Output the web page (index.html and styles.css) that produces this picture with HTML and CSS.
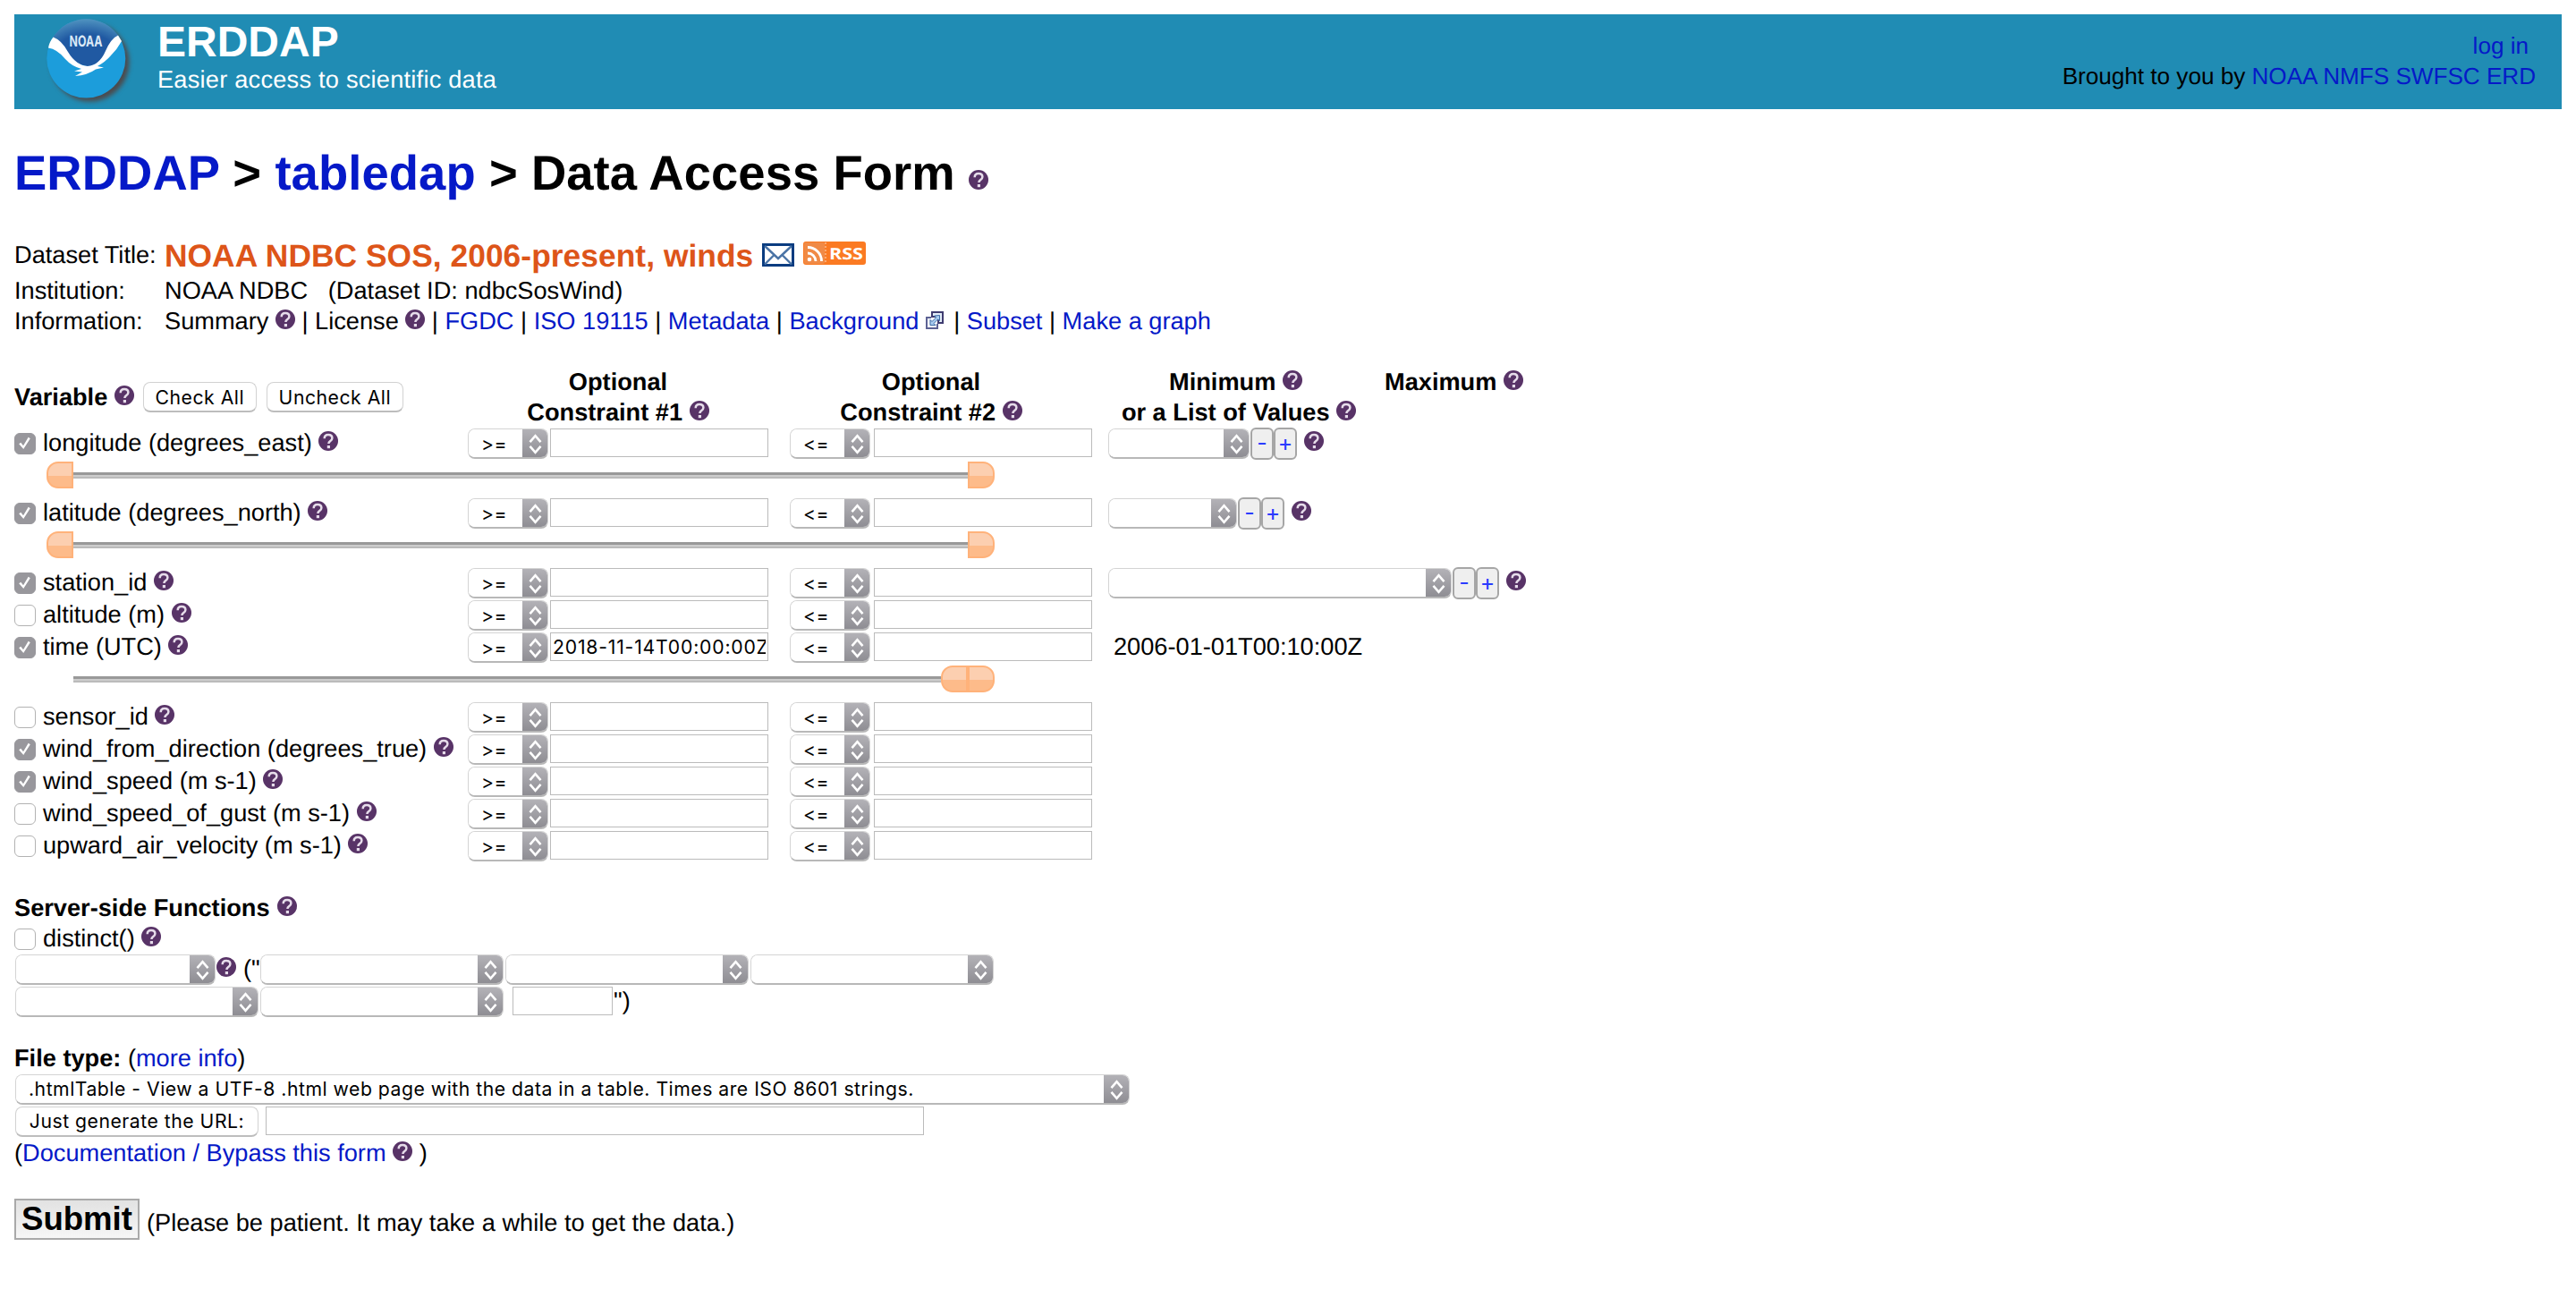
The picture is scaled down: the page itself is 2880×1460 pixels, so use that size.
FILE: index.html
```html
<!DOCTYPE html>
<html lang="en">
<head>
<meta charset="utf-8">
<title>ERDDAP - NOAA NDBC SOS, 2006-present, winds - Data Access Form</title>
<link rel="stylesheet" href="styles.css">
</head>
<body>
<svg class="defs" aria-hidden="true">
  <defs>
    <radialGradient id="top" cx=".5" cy=".8" r=".8">
      <stop offset=".6" stop-color="#2059a2"/><stop offset="1" stop-color="#4f93c0"/>
    </radialGradient>
  </defs>
  <symbol id="help" viewBox="0 0 22 22">
    <circle cx="11" cy="11" r="11" fill="#583367"/>
    <path d="M6.7 8.3C6.7 5.2 8.6 4 11 4s4.4 1.3 4.4 3.800c0 3.400-4 3.200-4 6.200" fill="none" stroke="#e6dcea" stroke-width="2.500"/>
    <rect x="9.800" y="16" width="3.200" height="3.200" fill="#e6dcea"/>
  </symbol>
  <symbol id="updown" viewBox="0 0 29 34">
    <path d="M8.500 15.200l6-7 6 7M8.500 19.800l6 7 6-7" fill="none" stroke="#fff" stroke-width="2.600"/>
  </symbol>
</svg>

<header class="banner">
  <svg class="logo" viewBox="0 0 120 106">
    <circle cx="60.500" cy="53.500" r="44" fill="#4c4a4c" class="logo-shadow"/>
    <circle cx="56.300" cy="49.500" r="44" fill="#1c9ddb"/>
    <path d="M19 26A44 44 0 0 1 93.600 26Q86 30 80 40Q71 58 57 58Q43 56 36 43Q29 30 19 26Z" fill="url(#top)"/>
    <path d="M19.500 25.500Q29 29 36 42Q45 57 58 58Q71 57 78 41Q84 27 92 23.500L96 30Q91 39 84 46Q78 53 69 58L76 59.500L67 61.500Q58 68 44 69L52 64.500L43 63.500L51 61Q40 58 33 50Q24 39 14 37.500Q15 31 19.500 25.500Z" fill="#fff"/>
    <text x="37.500" y="35.500" class="logo-text" textLength="37" lengthAdjust="spacingAndGlyphs">NOAA</text>
  </svg>
  <div class="brand">
    <div class="brand-name">ERDDAP</div>
    <div class="brand-tag">Easier access to scientific data</div>
  </div>
  <div class="account">
    <div class="login"><a href="#">log in</a></div>
    <div>Brought to you by <a href="#">NOAA NMFS SWFSC ERD</a></div>
  </div>
</header>

<h1><a href="#">ERDDAP</a> &gt; <a href="#">tabledap</a> &gt; Data Access Form <svg class="help"><use href="#help"/></svg></h1>

<div class="info">
  <div class="title-label">Dataset Title:</div>
  <div class="title">
    <span>NOAA NDBC SOS, 2006-present, winds</span>
    <svg class="mail" viewBox="0 0 36 26">
      <rect x="1.500" y="1.500" width="33" height="23" fill="#fff" stroke="#0a3c80" stroke-width="3"/>
      <path d="M3 3l15 14L33 3M3 23.500l10-10M33 23.500l-10-10" fill="none" stroke="#4a73a5" stroke-width="2.400"/>
    </svg>
    <svg class="rss" viewBox="0 0 70 26">
      <rect width="70" height="26" rx="3" fill="#fb7a22"/>
      <rect x="1" y="1" width="23" height="24" rx="2" fill="#f08a46"/>
      <path d="M5 13a9 9 0 0 1 9 9M5 6.500a15.500 15.500 0 0 1 15.500 15.500" fill="none" stroke="#fff" stroke-width="2.800"/>
      <circle cx="7" cy="20" r="2.300" fill="#fff"/>
      <path d="M25 1v24" stroke="#fdb98a" stroke-width="1.500" stroke-dasharray="2 2"/>
      <text x="29" y="19.500" class="rss-text" textLength="38" lengthAdjust="spacingAndGlyphs">RSS</text>
    </svg>
  </div>
  <div>Institution:</div>
  <div>NOAA NDBC &nbsp; (Dataset ID: ndbcSosWind)</div>
  <div>Information:</div>
  <div>Summary <svg class="help"><use href="#help"/></svg> | License <svg class="help"><use href="#help"/></svg> | <a href="#">FGDC</a> | <a href="#">ISO 19115</a> | <a href="#">Metadata</a> | <a href="#">Background</a> <svg class="ext" viewBox="0 0 20 20">
      <path d="M7 1h12v12h-5V6H7z" fill="#e4edf8" stroke="#3f3c70" stroke-width="2"/>
      <path d="M6 7H1v12h12v-5" fill="#f4f7fc" stroke="#5d6294" stroke-width="2"/>
      <path d="M15.500 4.500v6l-2-1.500-4.500 4.500 2 2h-6v-6l2 2 4.500-4.500-1.800-2z" fill="#a9cdf0" stroke="#3d6ba6" stroke-width="1"/>
    </svg>&nbsp; | <a href="#">Subset</a> | <a href="#">Make a graph</a></div>
</div>

<form>
<div class="row head">
  <div class="variable"><span>Variable <svg class="help"><use href="#help"/></svg></span><button type="button" class="btn check-all">Check All</button><button type="button" class="btn uncheck-all">Uncheck All</button></div>
  <div class="h1c">Optional<br>Constraint #1 <svg class="help"><use href="#help"/></svg></div>
  <div class="h2c">Optional<br>Constraint #2 <svg class="help"><use href="#help"/></svg></div>
  <div class="h3c"><span class="min">Minimum <svg class="help"><use href="#help"/></svg></span><br>or a List of Values <svg class="help"><use href="#help"/></svg></div>
  <div class="h4c">Maximum <svg class="help"><use href="#help"/></svg></div>
</div>

<div class="row">
  <label><input type="checkbox" checked><span>longitude (degrees_east) <svg class="help"><use href="#help"/></svg></span></label>
  <div class="con"><span class="sel op"><select><option>&gt;=</option></select><svg><use href="#updown"/></svg></span><input type="text"></div>
  <div class="con two"><span class="sel op"><select><option>&lt;=</option></select><svg><use href="#updown"/></svg></span><input type="text"></div>
  <div class="list"><span class="sel lon"><select></select><svg><use href="#updown"/></svg></span><button type="button" class="step">-</button><button type="button" class="step">+</button><svg class="help"><use href="#help"/></svg></div>
</div>
<div class="slider"><i class="thumb left"></i><i class="bar"></i><i class="thumb right"></i></div>

<div class="row">
  <label><input type="checkbox" checked><span>latitude (degrees_north) <svg class="help"><use href="#help"/></svg></span></label>
  <div class="con"><span class="sel op"><select><option>&gt;=</option></select><svg><use href="#updown"/></svg></span><input type="text"></div>
  <div class="con two"><span class="sel op"><select><option>&lt;=</option></select><svg><use href="#updown"/></svg></span><input type="text"></div>
  <div class="list"><span class="sel lat"><select></select><svg><use href="#updown"/></svg></span><button type="button" class="step">-</button><button type="button" class="step">+</button><svg class="help"><use href="#help"/></svg></div>
</div>
<div class="slider"><i class="thumb left"></i><i class="bar"></i><i class="thumb right"></i></div>

<div class="row">
  <label><input type="checkbox" checked><span>station_id <svg class="help"><use href="#help"/></svg></span></label>
  <div class="con"><span class="sel op"><select><option>&gt;=</option></select><svg><use href="#updown"/></svg></span><input type="text"></div>
  <div class="con two"><span class="sel op"><select><option>&lt;=</option></select><svg><use href="#updown"/></svg></span><input type="text"></div>
  <div class="list"><span class="sel station"><select></select><svg><use href="#updown"/></svg></span><button type="button" class="step">-</button><button type="button" class="step">+</button><svg class="help"><use href="#help"/></svg></div>
</div>
<div class="row">
  <label><input type="checkbox"><span>altitude (m) <svg class="help"><use href="#help"/></svg></span></label>
  <div class="con"><span class="sel op"><select><option>&gt;=</option></select><svg><use href="#updown"/></svg></span><input type="text"></div>
  <div class="con two"><span class="sel op"><select><option>&lt;=</option></select><svg><use href="#updown"/></svg></span><input type="text"></div>
</div>
<div class="row">
  <label><input type="checkbox" checked><span>time (UTC) <svg class="help"><use href="#help"/></svg></span></label>
  <div class="con"><span class="sel op"><select><option>&gt;=</option></select><svg><use href="#updown"/></svg></span><input type="text" value="2018-11-14T00:00:00Z"></div>
  <div class="con two"><span class="sel op"><select><option>&lt;=</option></select><svg><use href="#updown"/></svg></span><input type="text"></div>
  <div class="minval">2006-01-01T00:10:00Z</div>
</div>
<div class="slider late"><i class="bar"></i><i class="thumb left"></i><i class="thumb right"></i></div>

<div class="row">
  <label><input type="checkbox"><span>sensor_id <svg class="help"><use href="#help"/></svg></span></label>
  <div class="con"><span class="sel op"><select><option>&gt;=</option></select><svg><use href="#updown"/></svg></span><input type="text"></div>
  <div class="con two"><span class="sel op"><select><option>&lt;=</option></select><svg><use href="#updown"/></svg></span><input type="text"></div>
</div>
<div class="row">
  <label><input type="checkbox" checked><span>wind_from_direction (degrees_true) <svg class="help"><use href="#help"/></svg></span></label>
  <div class="con"><span class="sel op"><select><option>&gt;=</option></select><svg><use href="#updown"/></svg></span><input type="text"></div>
  <div class="con two"><span class="sel op"><select><option>&lt;=</option></select><svg><use href="#updown"/></svg></span><input type="text"></div>
</div>
<div class="row">
  <label><input type="checkbox" checked><span>wind_speed (m s-1) <svg class="help"><use href="#help"/></svg></span></label>
  <div class="con"><span class="sel op"><select><option>&gt;=</option></select><svg><use href="#updown"/></svg></span><input type="text"></div>
  <div class="con two"><span class="sel op"><select><option>&lt;=</option></select><svg><use href="#updown"/></svg></span><input type="text"></div>
</div>
<div class="row">
  <label><input type="checkbox"><span>wind_speed_of_gust (m s-1) <svg class="help"><use href="#help"/></svg></span></label>
  <div class="con"><span class="sel op"><select><option>&gt;=</option></select><svg><use href="#updown"/></svg></span><input type="text"></div>
  <div class="con two"><span class="sel op"><select><option>&lt;=</option></select><svg><use href="#updown"/></svg></span><input type="text"></div>
</div>
<div class="row">
  <label><input type="checkbox"><span>upward_air_velocity (m s-1) <svg class="help"><use href="#help"/></svg></span></label>
  <div class="con"><span class="sel op"><select><option>&gt;=</option></select><svg><use href="#updown"/></svg></span><input type="text"></div>
  <div class="con two"><span class="sel op"><select><option>&lt;=</option></select><svg><use href="#updown"/></svg></span><input type="text"></div>
</div>

<div class="section server"><b>Server-side Functions</b> <svg class="help"><use href="#help"/></svg></div>
<div class="row distinct">
  <label><input type="checkbox"><span>distinct() <svg class="help"><use href="#help"/></svg></span></label>
</div>
<div class="fn">
  <span class="sel fn-name"><select></select><svg><use href="#updown"/></svg></span>
  <svg class="help"><use href="#help"/></svg>
  <span class="open">("</span>
  <span class="sel arg"><select></select><svg><use href="#updown"/></svg></span>
  <span class="sel arg"><select></select><svg><use href="#updown"/></svg></span>
  <span class="sel arg"><select></select><svg><use href="#updown"/></svg></span>
</div>
<div class="fn">
  <span class="sel arg"><select></select><svg><use href="#updown"/></svg></span>
  <span class="sel arg"><select></select><svg><use href="#updown"/></svg></span>
  <input type="text" class="short">
  <span class="close">")</span>
</div>

<div class="section filetype"><b>File type:</b> (<a href="#">more info</a>)</div>
<div class="fn file"><span class="sel type"><select><option>.htmlTable - View a UTF-8 .html web page with the data in a table. Times are ISO 8601 strings.</option></select><svg><use href="#updown"/></svg></span></div>
<div class="fn url"><button type="button" class="btn generate">Just generate the URL:</button><input type="text" class="long"></div>
<div class="docs">(<a href="#">Documentation / Bypass this form</a> <svg class="help"><use href="#help"/></svg> )</div>

<div class="send"><button type="button" class="submit">Submit</button><span>(Please be patient. It may take a while to get the data.)</span></div>
</form>
</body>
</html>
```
FILE: styles.css
```css
* { box-sizing: border-box; }
body {
  margin: 16px;
  background: #fff;
  color: #000;
  font: 27.2px/34px "Liberation Sans", Arial, sans-serif;
  text-rendering: geometricPrecision;
}
a { color: #0519c8; text-decoration: none; }
form { margin: 0; }
.defs { display: block; width: 0; height: 0; position: absolute; }
.help { width: 22px; height: 22px; }

/* Banner */
.banner { display: flex; height: 106px; background: #208cb4; color: #fff; }
.logo { width: 120px; height: 106px; margin-left: 24px; }
.logo-shadow { filter: blur(2.5px); }
.logo-text { font: bold 17px Inter, sans-serif; fill: #dbe9f7; }
.brand { margin-left: 16px; padding-top: 7px; }
.brand-name { font-size: 48px; line-height: 50px; font-weight: bold; }
.brand-tag { line-height: 32px; letter-spacing: 0.23px; }
.account { margin-left: auto; padding: 17.600px 29px 0 0; color: #000; font-size: 26.100px; text-align: right; }
.login { padding-right: 8px; }

h1 { margin: 40px 0 0; font-size: 54.4px; line-height: 64px; letter-spacing: 0.08px; }

/* Dataset summary */
.info { display: grid; grid-template-columns: 168px auto; grid-template-rows: 42px 34px 34px; margin-top: 40px; white-space: nowrap; }
.title-label { line-height: 37px; }
.title { display: flex; color: #dd5519; font-size: 35.36px; font-weight: bold; line-height: 41px; letter-spacing: 0.04px; }
.mail { width: 36px; height: 26px; margin: 6px 10px 0 10px; }
.rss { width: 70px; height: 26px; margin-top: 4px; }
.rss-text { font: bold 18px "Open Sans", sans-serif; fill: #fff; letter-spacing: 0; }
.ext { width: 20px; height: 20px; margin: 0 -4px 0 0; }

/* Variable table */
.row { display: grid; grid-template-columns: 507px 361px 355px 309px auto; height: 36px; line-height: 32px; white-space: nowrap; }
.head { height: 69px; margin-top: 34px; line-height: 34px; font-weight: bold; }
.variable { display: flex; align-items: flex-start; padding-top: 17px; }
.h1c { width: 336px; text-align: center; }
.h2c { width: 314px; text-align: center; }
.h3c { width: 292px; text-align: center; }
.min { margin-right: 7px; }
label { display: flex; align-items: flex-start; }
.con, .list { display: flex; align-items: flex-start; }
.con .sel { margin-right: 2px; }
.con.two .sel { margin: 0 4px 0 -1px; }
.minval { padding-left: 6px; }

/* Controls */
input, select, button { margin: 0; color: #000; font: 21.200px Inter, sans-serif; letter-spacing: 0.51px; }
input[type="checkbox"] {
  appearance: none; flex: none; width: 24px; height: 24px; margin: 5px 8px 0 0;
  border: 1.5px solid #b2b2b2; border-radius: 6px; background: #fff;
}
input[type="checkbox"]:checked { border-color: #98979c; background: #98979c; }
input[type="checkbox"]:checked::before {
  content: ""; display: block; width: 21px; height: 21px; background: #fff;
  clip-path: polygon(20% 54%, 30% 47%, 43% 63%, 70% 18%, 80% 25%, 44% 81%);
}
input[type="text"] {
  width: 244px; height: 32px; padding: 0 2px; border: 1px solid #bbb; letter-spacing: 0.8px;
  background: #fff; outline: none;
}
.sel {
  display: flex; flex: none; height: 34px; overflow: hidden;
  border: 1px solid #d4d4d4; border-bottom: 2px solid #b8b8b8; border-radius: 8px; background: #fff;
}
.sel select { appearance: none; flex: 1; min-width: 0; padding: 0 0 0 14px; border: 0; background: #fff; outline: none; }
.sel svg { flex: none; width: 29px; height: 34px; margin: -1px -1px -2px 0; background: linear-gradient(#b4b3b8, #8c8b91); }
.op { width: 90px; }
.lon { width: 158px; }
.lat { width: 144px; }
.station { width: 384px; }
.fn-name { width: 224px; }
.arg { width: 272px; }
.type { width: 1246px; }
.btn { height: 34px; padding: 0; border: 1px solid #d2d2d2; border-bottom: 2px solid #bdbdbd; border-radius: 8px; background: #fff; text-align: center; }
.check-all { width: 127px; margin-left: 10px; }
.uncheck-all { width: 153px; margin-left: 11px; }
.step { flex: none; width: 26px; height: 36px; margin-top: -1px; padding: 0 0 2px; border: 2px solid #a6a6a6; border-radius: 6px; background: #efefef; color: #2a3cff; font-size: 25px; line-height: 28px; letter-spacing: 0; }
.list .sel { margin-right: 1px; }
.list .help { flex: none; margin: 3px 0 0 8px; }

/* Range sliders */
.slider { display: flex; align-items: center; height: 42px; padding: 0 0 10px 36px; }
.slider.late { padding-left: 66px; }
.bar { width: 1000px; height: 7px; border-top: 3px solid #999; border-bottom: 2px solid #bbb; background: #ccc; }
.late .bar { width: 970px; }
.thumb { width: 30px; height: 30px; border: 2px solid #ffb27a; background: linear-gradient(#fccfb0 55%, #fdbb8a 55%); }
.thumb.left { border-radius: 13px 0 0 13px; }
.thumb.right { border-radius: 0 13px 13px 0; }

/* Server-side functions */
.section { white-space: nowrap; }
.server { margin-top: 32.600px; }
.server .help { margin-left: 1px; }
.distinct { height: 35.400px; line-height: 34px; }
.distinct input[type="checkbox"] { margin-top: 6px; }
.fn { display: flex; align-items: flex-start; height: 36px; padding-left: 1px; gap: 2px; }
.fn .help { margin: 3px 6px 0 -1px; }
.open { width: 17px; line-height: 32px; }
.fn .short { width: 112px; margin-left: 8px; }
.close { margin-left: -1px; line-height: 31px; }

/* Output */
.filetype { margin-top: 26.600px; height: 35.400px; }
.generate { width: 272px; }
.fn .long { width: 736px; margin-left: 6px; }
.docs { margin-top: -0.700px; }
.send { display: flex; align-items: flex-start; margin-top: 33.700px; line-height: 54px; }
.submit { width: 140px; height: 46px; padding: 0; border: 2px solid #a9a9a9; background: linear-gradient(#e2e2e2, #f6f6f6); font: bold 36.600px/38px "Liberation Sans", Arial, sans-serif; letter-spacing: 0; margin-right: 8px; }
```
